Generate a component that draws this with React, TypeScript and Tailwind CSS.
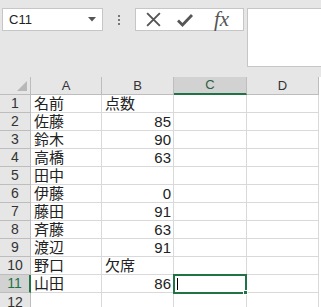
import React from "react";

const rows: [string, string, string][] = [
  ["名前", "点数", ""],
  ["佐藤", "85", "n"],
  ["鈴木", "90", "n"],
  ["高橋", "63", "n"],
  ["田中", "", ""],
  ["伊藤", "0", "n"],
  ["藤田", "91", "n"],
  ["斉藤", "63", "n"],
  ["渡辺", "91", "n"],
  ["野口", "欠席", ""],
  ["山田", "86", "n"],
];

const font = { fontFamily: '"Liberation Sans", "Noto Sans CJK JP", sans-serif' };

export default function App() {
  return (
    <div className="w-[321px] h-[307px] overflow-hidden bg-[#e6e6e6] text-[#222]" style={font}>
      {/* toolbar */}
      <div className="flex items-start pt-[8px] pl-[2px] h-[77px]">
        <div className="w-[101px] h-[23px] bg-white border border-[#c6c6c6] flex items-center pl-[6px] pr-[6px]">
          <span className="text-[13px] flex-1">C11</span>
          <svg width="8" height="5" viewBox="0 0 8 5"><path d="M0 0 L8 0 L4 4.5 Z" fill="#555" /></svg>
        </div>
        <div className="w-[32px] h-[23px] flex flex-col items-center justify-center gap-[2px]">
          <div className="w-[2px] h-[2px] bg-[#777]" />
          <div className="w-[2px] h-[2px] bg-[#777]" />
          <div className="w-[2px] h-[2px] bg-[#777]" />
        </div>
        <div className="w-[109px] h-[23px] bg-white border border-[#c6c6c6] flex items-center">
          <div className="w-[34px] flex justify-center">
            <svg width="17" height="17" viewBox="0 0 16 16">
              <path d="M2 2 L14 14 M14 2 L2 14" stroke="#555" strokeWidth="1.8" />
            </svg>
          </div>
          <div className="w-[30px] flex justify-center">
            <svg width="18" height="16" viewBox="0 0 18 16">
              <path d="M2 8.5 L6.5 13 L16 3" stroke="#555" strokeWidth="2.8" fill="none" />
            </svg>
          </div>
          <div className="flex-1 flex justify-center">
            <span className="text-[21px] italic text-[#555] leading-none" style={{ fontFamily: '"Liberation Serif", serif' }}>fx</span>
          </div>
        </div>
        <div className="ml-[3px] flex-1 h-[59px] bg-white border border-[#c6c6c6] border-r-0" />
      </div>

      {/* sheet */}
      <div className="grid grid-cols-[31px_71px_72px_73px_72px] auto-rows-[18px] bg-white">
        {/* header row */}
        <div className="relative bg-[#e6e6e6] border-r border-b border-[#bdbdbd]">
          <svg className="absolute right-[3px] bottom-[3px]" width="10" height="10" viewBox="0 0 10 10"><path d="M10 0 L10 10 L0 10 Z" fill="#b8b8b8" /></svg>
        </div>
        <div className="bg-[#e6e6e6] border-r border-b border-[#bdbdbd] flex items-center justify-center text-[13px] text-[#333]">A</div>
        <div className="bg-[#e6e6e6] border-r border-b border-[#bdbdbd] flex items-center justify-center text-[13px] text-[#333]">B</div>
        <div className="bg-[#d2d2d2] border-r border-[#bdbdbd] border-b-2 border-b-[#217346] flex items-center justify-center text-[13px] text-[#2e5e44]">C</div>
        <div className="bg-[#e6e6e6] border-r border-b border-[#bdbdbd] flex items-center justify-center text-[13px] text-[#333]">D</div>

        {rows.map((r, i) => {
          const sel = i === 10;
          return (
            <React.Fragment key={i}>
              <div
                className={
                  sel
                    ? "bg-[#d2d2d2] border-r-2 border-r-[#217346] border-b border-b-[#bdbdbd] flex items-center justify-center text-[14px] text-[#217346]"
                    : "bg-[#e6e6e6] border-r border-b border-[#bdbdbd] flex items-center justify-center text-[14px] text-[#333]"
                }
              >
                {i + 1}
              </div>
              <div className="border-r border-b border-[#d9d9d9] flex items-center pl-[3px] text-[15px] leading-none">{r[0]}</div>
              <div
                className={
                  "border-r border-b border-[#d9d9d9] flex items-center text-[15px] leading-none " +
                  (r[2] === "n" ? "justify-end pr-[2px]" : "pl-[3px]")
                }
              >
                {r[1]}
              </div>
              <div className="relative border-r border-b border-[#d9d9d9]">
                {sel && (
                  <div className="absolute -left-[1px] -top-[1px] w-[74px] h-[20px] border-2 border-[#217346]">
                    <div className="absolute left-[2px] top-[2px] w-[1px] h-[12px] bg-black" />
                    <div className="absolute -right-[3px] -bottom-[3px] w-[5px] h-[5px] bg-[#217346] border border-white" />
                  </div>
                )}
              </div>
              <div className="border-r border-b border-[#d9d9d9]" />
            </React.Fragment>
          );
        })}
        <div className="bg-[#e6e6e6] border-r border-[#bdbdbd] flex items-center justify-center text-[14px] text-[#333]">12</div>
        <div className="border-r border-[#d9d9d9]" />
        <div className="border-r border-[#d9d9d9]" />
        <div className="border-r border-[#d9d9d9]" />
        <div className="border-r border-[#d9d9d9]" />
      </div>
    </div>
  );
}
